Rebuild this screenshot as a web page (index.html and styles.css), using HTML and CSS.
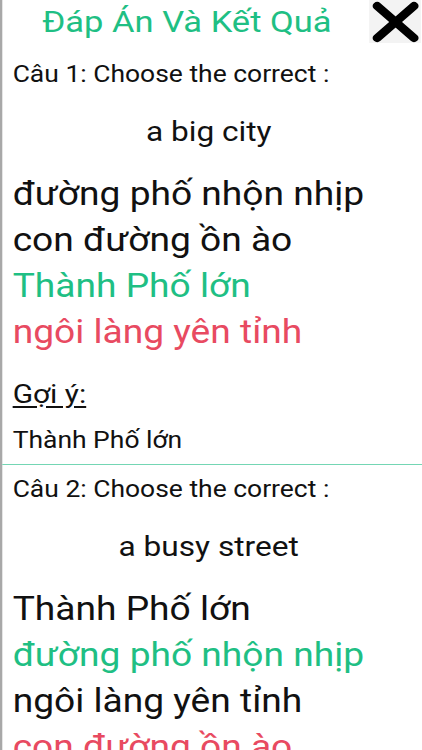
FILE: index.html
```html
<!DOCTYPE html>
<html lang="vi">
<head>
  <meta charset="UTF-8">
  <meta name="viewport" content="width=device-width, initial-scale=1.0">
  <title>Đáp Án Và Kết Quả</title>
  <link rel="stylesheet" href="styles.css">
</head>
<body>
  <div class="screen">
    <header class="header">
      <h1 class="title">Đáp Án Và Kết Quả</h1>
      <button class="close-btn" aria-label="Đóng">
        <svg viewBox="0 0 42 44" width="42" height="44">
          <path d="M5 6 L37 38 M37 6 L5 38" stroke="#000" stroke-width="8" stroke-linecap="round" fill="none"/>
        </svg>
      </button>
    </header>

    <section class="question">
      <p class="question-label">Câu 1: Choose the correct :</p>
      <p class="question-word">a big city</p>
      <ul class="options">
        <li class="option">đường phố nhộn nhịp</li>
        <li class="option">con đường ồn ào</li>
        <li class="option option-correct">Thành Phố lớn</li>
        <li class="option option-wrong">ngôi làng yên tỉnh</li>
      </ul>
      <p class="hint-label">Gợi ý:</p>
      <p class="hint-text">Thành Phố lớn</p>
    </section>

    <section class="question">
      <p class="question-label">Câu 2: Choose the correct :</p>
      <p class="question-word">a busy street</p>
      <ul class="options">
        <li class="option">Thành Phố lớn</li>
        <li class="option option-correct">đường phố nhộn nhịp</li>
        <li class="option">ngôi làng yên tỉnh</li>
        <li class="option option-wrong">con đường ồn ào</li>
      </ul>
      <p class="hint-label">Gợi ý:</p>
      <p class="hint-text">đường phố nhộn nhịp</p>
    </section>
  </div>
</body>
</html>
```

FILE: styles.css
```css
:root {
  --green: #1fbf84;
  --red: #e84a61;
  --text: #111111;
  --edge: #a8a8a8;
  --divider: #74d6b4;
}

* {
  margin: 0;
  padding: 0;
  box-sizing: border-box;
  font-family: Roboto, 'Noto Sans', sans-serif;
}

body {
  background: #fff;
  color: var(--text);
  overflow: hidden;
}

/* the app renders its text a little wide, so the whole screen is stretched */
.screen {
  width: 367px;
  min-height: 100vh;
  transform: scaleX(1.15);
  transform-origin: left top;
  border-left: 2px solid var(--edge);
}

.header {
  display: flex;
  align-items: flex-start;
  height: 44px;
  margin-bottom: 6px;
}

.title {
  flex: 1;
  text-align: center;
  font-size: 30px;
  font-weight: 400;
  color: var(--green);
  line-height: 43px;
  padding-left: 2px;
}

.close-btn {
  width: 45px;
  height: 43px;
  margin-right: 1px;
  border: none;
  background: #f3f3f3;
  display: flex;
  align-items: center;
  justify-content: center;
}

.question {
  padding: 10px 10px 9px 9px;
  border-bottom: 1px solid var(--divider);
}

.question-label {
  font-size: 23px;
  line-height: 30px;
}

.question-word {
  text-align: center;
  font-size: 27.5px;
  line-height: 30px;
  margin-top: 27px;
  padding-right: 5px;
}

.options {
  list-style: none;
  margin-top: 24px;
}

.option {
  font-size: 32.3px;
  line-height: 46px;
}

.option-correct {
  color: var(--green);
}

.option-wrong {
  color: var(--red);
}

.hint-label {
  font-size: 26px;
  line-height: 30px;
  text-decoration: underline;
  text-underline-offset: 3px;
  margin-top: 24px;
}

.hint-text {
  font-size: 23px;
  line-height: 28px;
  margin-top: 18px;
}
```
